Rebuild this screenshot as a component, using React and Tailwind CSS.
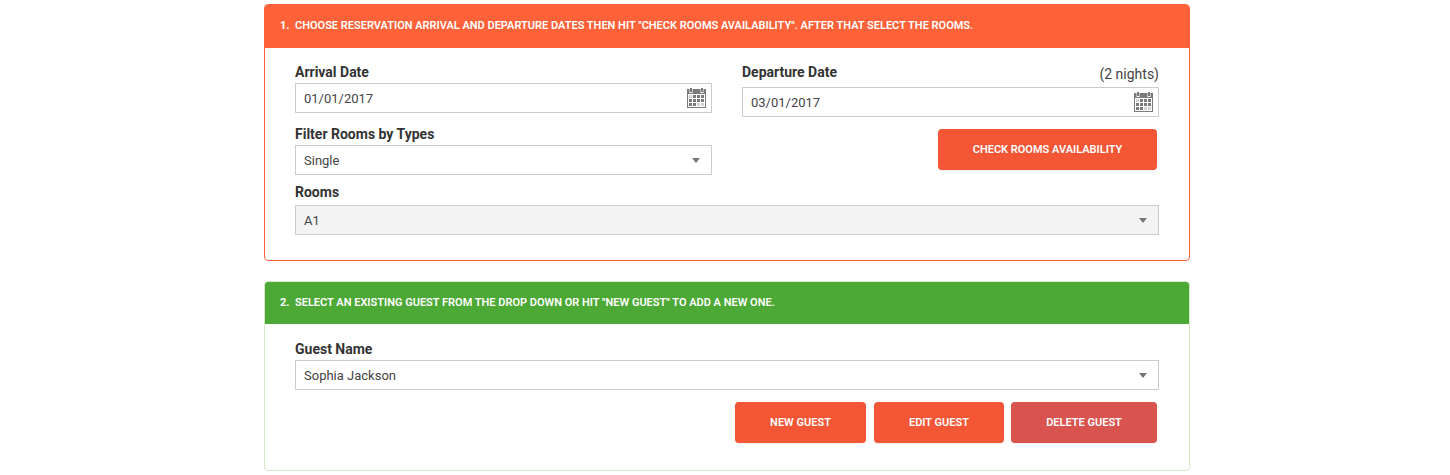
import React from 'react';

const CalendarIcon = () => (
  <svg width="19" height="20" viewBox="0 0 19 20" className="shrink-0">
    <rect x="0" y="1" width="19" height="19" fill="#7b7b7b" />
    <rect x="2.5" y="0" width="3" height="5" fill="#fff" />
    <rect x="13.5" y="0" width="3" height="5" fill="#fff" />
    <rect x="3" y="0" width="2" height="4" fill="#7b7b7b" />
    <rect x="14" y="0" width="2" height="4" fill="#7b7b7b" />
    <rect x="1" y="6" width="17" height="13" fill="#fff" />
    {[7, 11, 15].map((y, r) =>
      [2, 6, 10, 14].map((x, c) => {
        const light = (r === 0 && c === 0) || (r === 2 && c > 1);
        return <rect key={`${r}-${c}`} x={x} y={y} width="3" height="3" fill={light ? '#d4d4d4' : '#7b7b7b'} />;
      })
    )}
  </svg>
);

const Label = ({ children }) => (
  <label className="block text-[14px] leading-[16px] font-bold text-[#333]">{children}</label>
);

const DateInput = ({ value }) => (
  <div className="flex items-center justify-between h-[30px] border border-[#ccc] pl-2 pr-[5px] text-[13px] text-[#444] bg-white">
    <span className="pt-[2px]">{value}</span>
    <CalendarIcon />
  </div>
);

const Select = ({ value, disabled }) => (
  <div className={`flex items-center justify-between h-[30px] border border-[#ccc] pl-2 pr-[11px] text-[13px] text-[#444] ${disabled ? 'bg-[#f4f4f4]' : 'bg-white'}`}>
    <span className="pt-[2px]">{value}</span>
    <span className="w-0 h-0 border-x-[4px] border-x-transparent border-t-[5px] border-t-[#777]" />
  </div>
);

const Button = ({ children, className }) => (
  <button className={`h-[41px] pt-[2px] rounded-[4px] text-white text-[11px] font-semibold shadow-[0_1px_2px_rgba(0,0,0,0.08)] ${className}`}>
    {children}
  </button>
);

const Header = ({ num, text, className }) => (
  <div className={`flex items-center text-white font-bold uppercase text-[11px] ${className}`}>
    <span className="w-[15px]">{num}</span>
    <span className="font-semibold">{text}</span>
  </div>
);

export default function App() {
  return (
    <div className="w-[1450px] h-[475px] overflow-hidden bg-white pt-1 pl-[264px] font-['Roboto',sans-serif]">
      <div className="w-[926px]">
        {/* Step 1 */}
        <section className="h-[257px] border border-[#ff6138] rounded-[4px] overflow-hidden">
          <Header
            num="1."
            text={'Choose reservation arrival and departure dates then hit "Check Rooms Availability". After that select the rooms.'}
            className="h-[43px] pb-[1px] bg-[#ff6138] pl-[15px]"
          />
          <div className="px-[30px] pt-[16px]">
            <div className="grid grid-cols-[417px_417px] gap-x-[30px]">
              <div>
                <Label>Arrival Date</Label>
                <div className="mt-[3px]"><DateInput value="01/01/2017" /></div>
                <div className="mt-[13px]"><Label>Filter Rooms by Types</Label></div>
                <div className="mt-[3px]"><Select value="Single" /></div>
              </div>
              <div>
                <div className="flex justify-between">
                  <Label>Departure Date</Label>
                  <span className="text-[14px] leading-[16px] mt-[2px] text-[#444]">(2 nights)</span>
                </div>
                <div className="mt-[5px]"><DateInput value="03/01/2017" /></div>
                <div className="flex justify-end mt-[12px] pr-[2px]">
                  <Button className="w-[219px] bg-[#f25635]">CHECK ROOMS AVAILABILITY</Button>
                </div>
              </div>
            </div>
            <div className="mt-[9px]"><Label>Rooms</Label></div>
            <div className="mt-[5px]"><Select value="A1" disabled /></div>
          </div>
        </section>

        {/* Step 2 */}
        <section className="mt-[20px] h-[190px] border border-[#d5e8c6] rounded-[4px] overflow-hidden">
          <Header
            num="2."
            text={'Select an existing guest from the drop down or hit "New Guest" to add a new one.'}
            className="h-[42px] bg-[#4ca935] pl-[15px]"
          />
          <div className="px-[30px] pt-[17px]">
            <Label>Guest Name</Label>
            <div className="mt-[3px]"><Select value="Sophia Jackson" /></div>
            <div className="flex justify-end mt-[12px] pr-[2px]">
              <Button className="w-[131px] bg-[#f25635]">NEW GUEST</Button>
              <Button className="w-[130px] ml-[8px] bg-[#f25635]">EDIT GUEST</Button>
              <Button className="w-[146px] ml-[7px] bg-[#d9534f]">DELETE GUEST</Button>
            </div>
          </div>
        </section>
      </div>
    </div>
  );
}
